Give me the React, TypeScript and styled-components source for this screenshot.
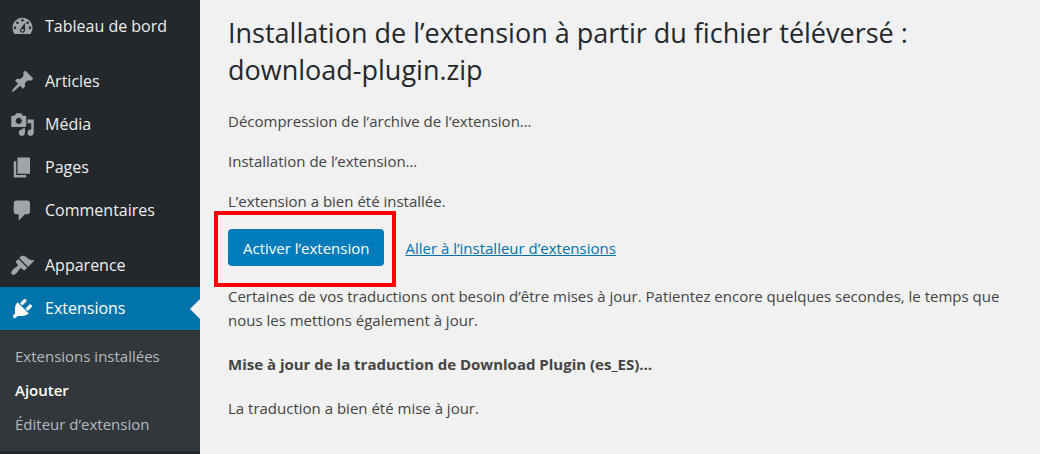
import React from 'react';
import styled, { createGlobalStyle, css } from 'styled-components';

const GlobalStyle = createGlobalStyle`
  *, *::before, *::after { box-sizing: border-box; }
  body {
    margin: 0;
    background: #f1f1f1;
    color: #444;
    font-family: "Segoe UI", "Open Sans", "Noto Sans", sans-serif;
    font-size: 15px;
    line-height: 24px;
  }
`;

const Layout = styled.div`
  display: flex;
  min-height: 100vh;
`;

const Sidebar = styled.nav`
  flex: 0 0 200px;
  padding-top: 5px;
  background: #23282d;
`;

const MenuGroup = styled.ul`
  list-style: none;
  margin: 0 0 12px;
  padding: 0;
`;

const MenuLink = styled.a<{ $current?: boolean }>`
  position: relative;
  display: flex;
  align-items: center;
  gap: 10px;
  height: 43px;
  padding: 0 10px 1px;
  color: #eee;
  font-size: 16px;
  text-decoration: none;
  ${(p) =>
    p.$current &&
    css`
      background: #0073aa;
      color: #fff;
      &::after {
        content: '';
        position: absolute;
        right: 0;
        top: 50%;
        margin-top: -10px;
        border: 10px solid transparent;
        border-left-width: 0;
        border-right-color: #f1f1f1;
      }
    `}
`;

const Icon = styled.svg<{ $current?: boolean }>`
  flex: none;
  width: 25px;
  height: 25px;
  fill: ${(p) => (p.$current ? '#fff' : '#a0a5aa')};
`;

const Submenu = styled.ul`
  list-style: none;
  margin: 0;
  padding: 9px 0 10px;
  background: #32373c;
`;

const SubmenuLink = styled.a<{ $current?: boolean }>`
  display: block;
  padding: 5px 15px;
  color: ${(p) => (p.$current ? '#fff' : '#b4b9be')};
  font-weight: ${(p) => (p.$current ? 600 : 400)};
  text-decoration: none;
`;

const Content = styled.main`
  flex: 1;
  min-width: 0;
  padding: 14px 20px 20px 28px;
`;

const Title = styled.h1`
  margin: 0 0 21px;
  color: #23282d;
  font-size: 27px;
  font-weight: 400;
  line-height: 37px;
`;

const Message = styled.p`
  margin: 0 0 16px;
`;

const Notice = styled.p`
  margin: 0 0 20px;
`;

const Actions = styled.div`
  display: flex;
  align-items: center;
  gap: 21px;
  margin-bottom: 18px;
`;

const Highlight = styled.div`
  position: relative;
  display: flex;
  &::after {
    content: '';
    position: absolute;
    inset: -18px -12px -21px -14px;
    border: 4px solid #fe0000;
    border-radius: 1px;
    pointer-events: none;
  }
`;

const PrimaryButton = styled.button`
  height: 37px;
  padding: 0 15px;
  border: 0;
  border-radius: 4px;
  background: #007cba;
  color: #fff;
  font: inherit;
  white-space: nowrap;
`;

const TextLink = styled.a`
  color: #0073aa;
  text-decoration: underline;
`;

type Item = { label: string; path: string; current?: boolean };

const mainItems: Item[][] = [
  [
    {
      label: 'Tableau de bord',
      path: 'M3.76 16h12.48c1.1-1.37 1.76-3.11 1.76-5 0-4.42-3.58-8-8-8s-8 3.58-8 8c0 1.89.66 3.63 1.76 5zM10 4c.55 0 1 .45 1 1s-.45 1-1 1-1-.45-1-1 .45-1 1-1zM6 6c.55 0 1 .45 1 1s-.45 1-1 1-1-.45-1-1 .45-1 1-1zm8 0c.55 0 1 .45 1 1s-.45 1-1 1-1-.45-1-1 .45-1 1-1zm-5.37 5.55L12 7v6c0 1.1-.9 2-2 2s-2-.9-2-2c0-.57.24-1.08.63-1.45zM4 10c.55 0 1 .45 1 1s-.45 1-1 1-1-.45-1-1 .45-1 1-1zm12 0c.55 0 1 .45 1 1s-.45 1-1 1-1-.45-1-1 .45-1 1-1zm-5 3c0-.55-.45-1-1-1s-1 .45-1 1 .45 1 1 1 1-.45 1-1z',
    },
  ],
  [
    {
      label: 'Articles',
      path: 'M10.44 3.02l1.82-1.82 6.36 6.35-1.83 1.82c-1.05-.68-2.48-.57-3.41.36l-.75.75c-.92.93-1.04 2.35-.35 3.41l-1.83 1.82-2.41-2.41-2.8 2.79c-.42.42-3.38 2.71-3.8 2.29s1.86-3.39 2.28-3.81l2.79-2.79L4.1 9.36l1.83-1.82c1.05.69 2.48.57 3.4-.36l.75-.75c.93-.92 1.05-2.35.36-3.41z',
    },
    {
      label: 'Média',
      path: 'M13 11V4c0-.55-.45-1-1-1h-1.67L9 1H5L3.67 3H2c-.55 0-1 .45-1 1v7c0 .55.45 1 1 1h10c.55 0 1-.45 1-1zM7 4.5c1.38 0 2.5 1.12 2.5 2.5S8.38 9.5 7 9.5 4.5 8.38 4.5 7 5.62 4.5 7 4.5zM14 6h5v10.5c0 1.38-1.12 2.5-2.5 2.5S14 17.88 14 16.5s1.12-2.5 2.5-2.5c.17 0 .34.02.5.05V9h-3V6zm-4 8.05V13h2v3.5c0 1.38-1.12 2.5-2.5 2.5S7 17.88 7 16.5 8.12 14 9.5 14c.17 0 .34.02.5.05z',
    },
    { label: 'Pages', path: 'M6 15V2h10v13H6zm-1 1h8v2H3V5h2v11z' },
    {
      label: 'Commentaires',
      path: 'M5 2h9c1.1 0 2 .9 2 2v7c0 1.1-.9 2-2 2h-2l-5 5v-5H5c-1.1 0-2-.9-2-2V4c0-1.1.9-2 2-2z',
    },
  ],
  [
    {
      label: 'Apparence',
      path: 'M14.48 11.06L7.41 3.99l1.5-1.5c.5-.56 2.3-.47 3.51.32 1.21.8 1.43 1.28 2.91 2.1 1.18.64 2.45 1.26 4.45.85zm-.71.71L6.7 4.7 4.93 6.47c-.39.39-.39 1.02 0 1.41l1.06 1.06c.39.39.39 1.03 0 1.42-.6.6-1.43 1.11-2.21 1.69-.35.26-.7.53-1.01.84C1.43 14.23.4 16.08 1.4 17.07c.99 1 2.84-.03 4.18-1.36.31-.31.58-.66.85-1.02.57-.78 1.08-1.61 1.69-2.21.39-.39 1.02-.39 1.41 0l1.06 1.06c.39.39 1.02.39 1.41 0z',
    },
    {
      label: 'Extensions',
      current: true,
      path: 'M13.11 4.36L9.87 7.6 8 5.73l3.24-3.24c.35-.34 1.05-.2 1.56.32.52.51.66 1.21.31 1.55zm-8 1.77l.91-1.12 9.01 9.01-1.19.84c-.71.71-2.63 1.16-3.82 1.16H6.14L4.9 17.26c-.59.59-1.54.59-2.12 0-.59-.58-.59-1.53 0-2.12l1.24-1.24v-3.88c0-1.13.4-3.19 1.09-3.89zm7.26 3.97l3.24-3.24c.34-.35 1.04-.21 1.55.31.52.51.66 1.21.31 1.55l-3.24 3.25z',
    },
  ],
];

const subItems = [
  { label: 'Extensions installées' },
  { label: 'Ajouter', current: true },
  { label: 'Éditeur d’extension' },
];

export default function App() {
  return (
    <>
      <GlobalStyle />
      <Layout>
        <Sidebar>
          {mainItems.map((group, i) => (
            <MenuGroup key={i}>
              {group.map((item) => (
                <li key={item.label}>
                  <MenuLink href="#" $current={item.current}>
                    <Icon viewBox="0 0 20 20" aria-hidden="true" $current={item.current}>
                      <path d={item.path} />
                    </Icon>
                    {item.label}
                  </MenuLink>
                  {item.current && (
                    <Submenu>
                      {subItems.map((sub) => (
                        <li key={sub.label}>
                          <SubmenuLink href="#" $current={sub.current}>
                            {sub.label}
                          </SubmenuLink>
                        </li>
                      ))}
                    </Submenu>
                  )}
                </li>
              ))}
            </MenuGroup>
          ))}
        </Sidebar>
        <Content>
          <Title>Installation de l’extension à partir du fichier téléversé : download-plugin.zip</Title>
          <Message>Décompression de l’archive de l’extension…</Message>
          <Message>Installation de l’extension…</Message>
          <Message>L’extension a bien été installée.</Message>
          <Actions>
            <Highlight>
              <PrimaryButton type="button">Activer l’extension</PrimaryButton>
            </Highlight>
            <TextLink href="#">Aller à l’installeur d’extensions</TextLink>
          </Actions>
          <Notice>
            Certaines de vos traductions ont besoin d’être mises à jour. Patientez encore quelques secondes, le
            temps que nous les mettions également à jour.
          </Notice>
          <Notice as="h4">Mise à jour de la traduction de Download Plugin (es_ES)…</Notice>
          <Notice>La traduction a bien été mise à jour.</Notice>
        </Content>
      </Layout>
    </>
  );
}
